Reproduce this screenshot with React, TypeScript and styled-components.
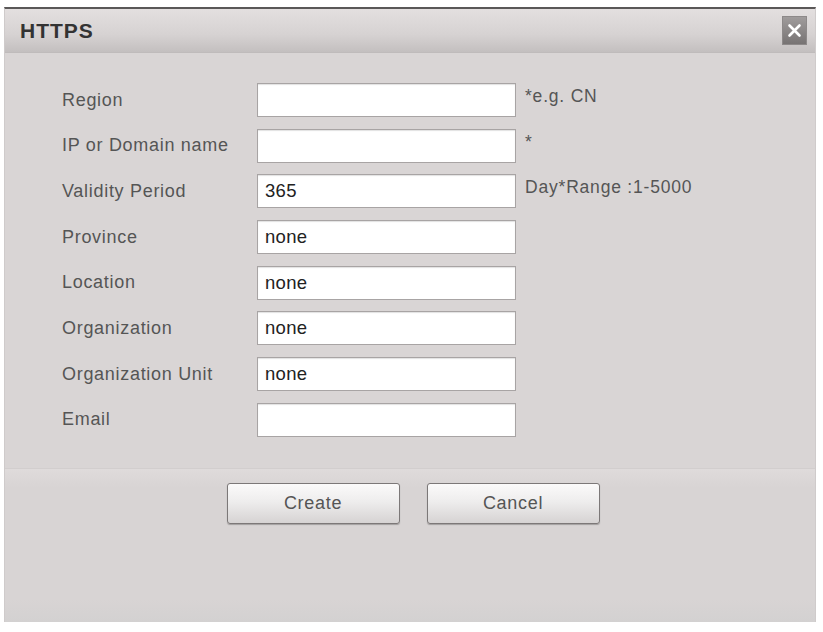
import React from "react";
import styled, { createGlobalStyle } from "styled-components";

const GlobalStyle = createGlobalStyle`
  html, body {
    margin: 0;
    padding: 0;
    background: #ffffff;
  }
  body {
    font-family: "Liberation Sans", Arial, sans-serif;
  }
`;

const Page = styled.div`
  width: 823px;
  height: 632px;
  padding: 7px 7px 0 4px;
  box-sizing: border-box;
`;

const Dialog = styled.div`
  width: 812px;
  height: 615px;
  display: flex;
  flex-direction: column;
  border-top: 2px solid #5a5858;
  border-left: 1px solid #cfcbcb;
  border-right: 1px solid #cfcbcb;
  box-sizing: border-box;
  background: #d9d5d5;
`;

const Header = styled.div`
  height: 43px;
  flex: none;
  display: flex;
  align-items: center;
  justify-content: space-between;
  padding: 0 8px 0 15px;
  background: linear-gradient(#e3dfdf, #d6d2d2 60%, #c3bfbf);
  border-bottom: 1px solid #bfbbbb;
`;

const Title = styled.div`
  font-size: 21px;
  font-weight: bold;
  letter-spacing: 1px;
  color: #333;
`;

const CloseButton = styled.div`
  width: 25px;
  height: 29px;
  display: flex;
  align-items: center;
  justify-content: center;
  background: linear-gradient(#a09c9c, #777373);
  border: 1px solid #8d8989;
  box-sizing: border-box;
`;

const Body = styled.div`
  flex: none;
  padding: 30px 0 31px 57px;
  border-bottom: 1px solid #d2cece;
`;

const Form = styled.div`
  display: grid;
  grid-template-columns: 195px 259px auto;
  grid-auto-rows: 34px;
  row-gap: 11.7px;
  align-items: center;
`;

const Label = styled.div`
  font-size: 18px;
  letter-spacing: 0.7px;
  color: #555;
  white-space: nowrap;
`;

const Input = styled.input`
  width: 259px;
  height: 34px;
  box-sizing: border-box;
  border: 1px solid #a8a4a4;
  box-shadow: inset 0 1px 1px rgba(0, 0, 0, 0.12);
  background: #fff;
  padding: 0 7px;
  font-family: "Liberation Sans", Arial, sans-serif;
  font-size: 18.5px;
  letter-spacing: 0.3px;
  color: #222;
  outline: none;
`;

const Hint = styled.div`
  align-self: start;
  padding: 4px 0 0 9px;
  font-size: 17.5px;
  line-height: 18px;
  letter-spacing: 0.8px;
  color: #555;
  white-space: nowrap;
`;

const Footer = styled.div`
  flex: 1;
  display: flex;
  justify-content: center;
  align-items: flex-start;
  gap: 27px;
  padding: 14px 0 0 6px;
  background: linear-gradient(#dfdbdb, #d8d4d4 12%, #d8d4d4 85%, #d3d1d1);
`;

const Button = styled.button`
  width: 173px;
  height: 41px;
  border: 1px solid #7c7878;
  border-radius: 3px;
  background: linear-gradient(#fbfafa, #eeeded 45%, #d6d3d3);
  box-shadow: 0 1px 1px rgba(0, 0, 0, 0.25);
  font-family: "Liberation Sans", Arial, sans-serif;
  font-size: 18px;
  letter-spacing: 0.7px;
  color: #555;
  padding: 0;
`;

const fields = [
  { label: "Region", value: "", hint: "*e.g. CN" },
  { label: "IP or Domain name", value: "", hint: "*" },
  { label: "Validity Period", value: "365", hint: "Day*Range :1-5000" },
  { label: "Province", value: "none", hint: "" },
  { label: "Location", value: "none", hint: "" },
  { label: "Organization", value: "none", hint: "" },
  { label: "Organization Unit", value: "none", hint: "" },
  { label: "Email", value: "", hint: "" },
];

const App = () => {
  return (
    <>
      <GlobalStyle />
      <Page>
        <Dialog>
          <Header>
            <Title>HTTPS</Title>
            <CloseButton>
              <svg width="15" height="15" viewBox="0 0 15 15">
                <path
                  d="M2.5 2.5 L12.5 12.5 M12.5 2.5 L2.5 12.5"
                  stroke="#fff"
                  strokeWidth="2.6"
                  strokeLinecap="round"
                />
              </svg>
            </CloseButton>
          </Header>
          <Body>
            <Form>
              {fields.map((f) => (
                <React.Fragment key={f.label}>
                  <Label>{f.label}</Label>
                  <Input defaultValue={f.value} />
                  <Hint>{f.hint}</Hint>
                </React.Fragment>
              ))}
            </Form>
          </Body>
          <Footer>
            <Button>Create</Button>
            <Button>Cancel</Button>
          </Footer>
        </Dialog>
      </Page>
    </>
  );
};

export default App;
